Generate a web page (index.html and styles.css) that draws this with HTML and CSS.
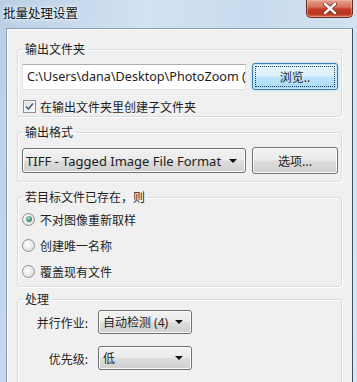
FILE: index.html
```html
<!DOCTYPE html>
<html lang="zh-CN">
<head>
  <meta charset="UTF-8">
  <title>批量处理设置</title>
  <link rel="stylesheet" href="styles.css">
</head>
<body>

<div class="window">

  <div class="titlebar">
    <div class="title">批量处理设置</div>
    <div class="close">
      <svg width="14" height="11" viewBox="0 0 14 11">
        <path d="M2 1 L12 10 M12 1 L2 10" stroke="#6b2a20" stroke-width="4" stroke-linecap="round"/>
        <path d="M2 1 L12 10 M12 1 L2 10" stroke="#ffffff" stroke-width="2.4" stroke-linecap="round"/>
      </svg>
    </div>
  </div>

  <div class="frame">
    <div class="client">

      <fieldset class="group group-output">
        <legend>输出文件夹</legend>
        <div class="row">
          <div class="textbox">C:\Users\dana\Desktop\PhotoZoom (</div>
          <button class="btn btn-focus"><span class="focus-rect">浏览..</span></button>
        </div>
        <label class="check-row">
          <span class="checkbox">
            <svg width="9" height="9" viewBox="0 0 9 9">
              <path d="M1 4.5 L3.5 7 L8 1.5" fill="none" stroke="#4a5f78" stroke-width="1.6"/>
            </svg>
          </span>
          在输出文件夹里创建子文件夹
        </label>
      </fieldset>

      <fieldset class="group group-format">
        <legend>输出格式</legend>
        <div class="row">
          <div class="combo combo-wide">
            <span>TIFF - Tagged Image File Format</span>
            <span class="arrow"></span>
          </div>
          <button class="btn">选项...</button>
        </div>
      </fieldset>

      <fieldset class="group group-exists">
        <legend>若目标文件已存在，则</legend>
        <div class="radio-list">
          <label class="radio-row"><span class="radio checked"><span class="dot"></span></span>不对图像重新取样</label>
          <label class="radio-row"><span class="radio"></span>创建唯一名称</label>
          <label class="radio-row"><span class="radio"></span>覆盖现有文件</label>
        </div>
      </fieldset>

      <fieldset class="group group-process">
        <legend>处理</legend>
        <div class="form-grid">
          <div class="form-label">并行作业:</div>
          <div class="combo combo-small">
            <span>自动检测 (4)</span>
            <span class="arrow"></span>
          </div>
          <div class="form-label">优先级:</div>
          <div class="combo combo-small">
            <span>低</span>
            <span class="arrow"></span>
          </div>
        </div>
      </fieldset>

    </div>
  </div>

</div>

</body>
</html>
```

FILE: styles.css
```css
body {
  margin: 0;
  width: 357px;
  height: 382px;
  overflow: hidden;
  font-family: "Noto Sans", "Noto Sans CJK SC", sans-serif;
  font-size: 12px;
  color: #1e1e1e;
}
.window {
  height: 382px;
  display: flex;
  flex-direction: column;
  background: linear-gradient(100deg, #b9cfe6 0%, #d3e2f2 35%, #c8dbee 60%, #dae6f3 100%);
}
.titlebar {
  height: 28px;
  display: flex;
  justify-content: space-between;
  align-items: flex-start;
  flex-shrink: 0;
}
.title {
  margin: 5px 0 0 3px;
  font-family: "Noto Sans CJK SC", sans-serif;
  font-size: 12.5px;
  line-height: 16px;
  color: #111;
  text-shadow: 0 0 6px #ffffff, 0 0 3px #ffffff;
}
.close {
  width: 45px;
  height: 17px;
  margin-right: 4px;
  border: 1px solid #6e2a1f;
  border-top: none;
  border-radius: 0 0 5px 5px;
  background: linear-gradient(#e3a08f 0%, #d7735d 40%, #c23b24 55%, #b9361f 80%, #d06a52 100%);
  box-shadow: inset 0 0 0 1px rgba(255, 200, 185, 0.45);
  display: flex;
  align-items: center;
  justify-content: center;
}
.frame {
  flex: 1;
  padding: 0 4px 0 6px;
  display: flex;
}
.client {
  flex: 1;
  background: #f0f0f0;
  border: 1px solid #8d9fb5;
  border-right-color: #3f4f60;
  border-bottom: none;
  padding: 12px 10px 0 10px;
  box-shadow: inset 1px 1px 0 #ffffff;
}
.group {
  margin: 0;
  border: 1px solid #d5dfe5;
  border-radius: 3px;
  box-shadow: inset 1px 1px 0 #ffffff, 1px 1px 0 #ffffff;
  padding: 0 3px 0 4px;
  min-width: 0;
}
.group legend {
  padding: 0 2px;
  margin-left: 1px;
  font-family: "Noto Sans CJK SC", sans-serif;
  line-height: 16px;
  height: 16px;
}
.group-output {
  padding-top: 6px;
  padding-bottom: 2px;
}
.group-format {
  margin-top: 7px;
  padding-top: 7px;
  padding-bottom: 7px;
}
.group-exists {
  margin-top: 7px;
  padding-top: 6px;
  padding-bottom: 7px;
}
.group-process {
  margin-top: 4px;
  padding-top: 3px;
  padding-bottom: 20px;
}
.row {
  display: flex;
  justify-content: space-between;
  align-items: center;
}
.textbox {
  width: 224px;
  height: 26px;
  box-sizing: border-box;
  background: #ffffff;
  border: 1px solid #dbdfe6;
  border-top-color: #abadb3;
  border-left-color: #e2e3ea;
  padding: 0 4px;
  font-size: 12.6px;
  line-height: 24px;
  white-space: nowrap;
}
.btn {
  width: 86px;
  height: 27px;
  box-sizing: border-box;
  border: 1px solid #707070;
  border-radius: 3px;
  background: linear-gradient(#f2f2f2 0%, #ebebeb 48%, #dddddd 52%, #cfcfcf 100%);
  box-shadow: inset 0 0 0 1px #fbfbfb;
  font-family: "Noto Sans CJK SC", sans-serif;
  font-size: 12px;
  color: #1e1e1e;
  padding: 0;
}
.btn-focus {
  border-color: #3c7fb1;
  background: linear-gradient(#eaf6fd 0%, #d9f0fc 48%, #bee6fd 52%, #a7d9f5 100%);
  box-shadow: inset 0 0 0 1px #c6e7f8, 0 0 2px #7fc3ea;
  padding: 2px;
}
.focus-rect {
  display: flex;
  align-items: center;
  justify-content: center;
  height: 100%;
  box-sizing: border-box;
  border: 1px dotted #1f3b53;
}
.check-row {
  display: flex;
  align-items: center;
  gap: 4px;
  margin-top: 8px;
  height: 16px;
  margin-left: 1px;
  font-family: "Noto Sans CJK SC", sans-serif;
}
.checkbox {
  width: 11px;
  height: 11px;
  border: 1px solid #8f8f8f;
  background: linear-gradient(135deg, #dcdcdc, #ffffff);
  box-shadow: inset 0 0 0 1px #f4f4f4;
  display: flex;
  align-items: center;
  justify-content: center;
}
.combo {
  height: 25px;
  box-sizing: border-box;
  border: 1px solid #707070;
  border-radius: 3px;
  background: linear-gradient(#f2f2f2 0%, #ebebeb 48%, #dddddd 52%, #cfcfcf 100%);
  box-shadow: inset 0 0 0 1px #fbfbfb;
  display: flex;
  align-items: center;
  justify-content: space-between;
  padding: 0 8px 0 3px;
  white-space: nowrap;
}
.combo-wide {
  width: 224px;
  font-size: 13px;
}
.combo-small {
  width: 94px;
  height: 24px;
  padding-left: 4px;
}
.arrow {
  width: 0;
  height: 0;
  border-left: 4px solid transparent;
  border-right: 4px solid transparent;
  border-top: 4px solid #111;
}
.radio-list {
  display: flex;
  flex-direction: column;
  gap: 10px;
}
.radio-row {
  display: flex;
  align-items: center;
  gap: 5px;
  height: 16px;
  font-family: "Noto Sans CJK SC", sans-serif;
}
.radio {
  width: 11px;
  height: 11px;
  border-radius: 50%;
  border: 1px solid #8e8f8f;
  background: radial-gradient(circle at 40% 40%, #ffffff, #d6d6d6);
  display: flex;
  align-items: center;
  justify-content: center;
}
.radio .dot {
  width: 6px;
  height: 6px;
  border-radius: 50%;
  background: radial-gradient(circle at 40% 35%, #a9e3c8, #2d7d6e 70%, #1d5c57);
}
.form-grid {
  display: grid;
  grid-template-columns: 66px auto;
  justify-content: start;
  align-items: center;
  column-gap: 10px;
  row-gap: 12px;
}
.form-label {
  text-align: right;
  font-family: "Noto Sans CJK SC", sans-serif;
}
```
